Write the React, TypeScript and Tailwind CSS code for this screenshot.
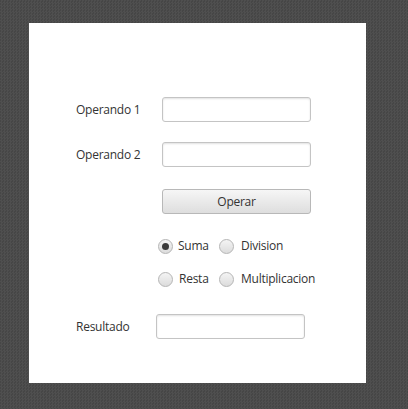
import type { ReactNode } from "react";

function Field({ className = "" }: { className?: string }) {
  return (
    <div
      className={`h-[25px] w-[149px] rounded-[3px] border border-[#c4c4c4] bg-white shadow-[inset_0_1px_2px_rgba(0,0,0,0.12)] ${className}`}
    />
  );
}

function Radio({ checked, label, gap }: { checked?: boolean; label: string; gap: string }) {
  return (
    <div className="flex items-center">
      <div className="flex h-[15px] w-[15px] items-center justify-center rounded-full border border-[#b5b5b5] bg-gradient-to-b from-[#f4f4f4] to-[#dcdcdc]">
        {checked && <div className="h-[7px] w-[7px] rounded-full bg-[#3a3a3a]" />}
      </div>
      <span className={gap}>{label}</span>
    </div>
  );
}

function Row({ label, children, className = "" }: { label: string; children: ReactNode; className?: string }) {
  return (
    <div className={`flex items-center ${className}`}>
      <span className="w-[86px]">{label}</span>
      {children}
    </div>
  );
}

export default function App() {
  return (
    <div className="h-[409px] w-[408px] overflow-hidden bg-[#4a4a4a] bg-[repeating-conic-gradient(#4f4f4f_0_25%,#464646_0_50%)] bg-[length:3px_3px] pt-[23px] pl-[29px]">
      <div
        className="h-[360px] w-[337px] bg-white pt-[74px] pl-[47px] text-[12px] tracking-[-0.25px] text-[#333]"
        style={{ fontFamily: '"Open Sans", "Noto Sans", sans-serif' }}
      >
        <Row label="Operando 1">
          <Field />
        </Row>
        <Row label="Operando 2" className="mt-[20px]">
          <Field />
        </Row>
        <div className="mt-[22px] pl-[86px]">
          <button className="h-[25px] w-[149px] rounded-[3px] border border-[#b8b8b8] bg-gradient-to-b from-[#f6f6f6] to-[#dedede] text-[12px] text-[#333]">
            Operar
          </button>
        </div>
        <div className="mt-[23px] grid w-fit grid-cols-[61px_auto] gap-y-[15px] pl-[82px]">
          <Radio checked label="Suma" gap="ml-[5px]" />
          <Radio label="Division" gap="ml-[7px]" />
          <Radio label="Resta" gap="ml-[6px]" />
          <Radio label="Multiplicacion" gap="ml-[7px]" />
        </div>
        <Row label="Resultado" className="mt-[26px] [&>span]:w-[80px]">
          <Field className="w-[148px]" />
        </Row>
      </div>
    </div>
  );
}
